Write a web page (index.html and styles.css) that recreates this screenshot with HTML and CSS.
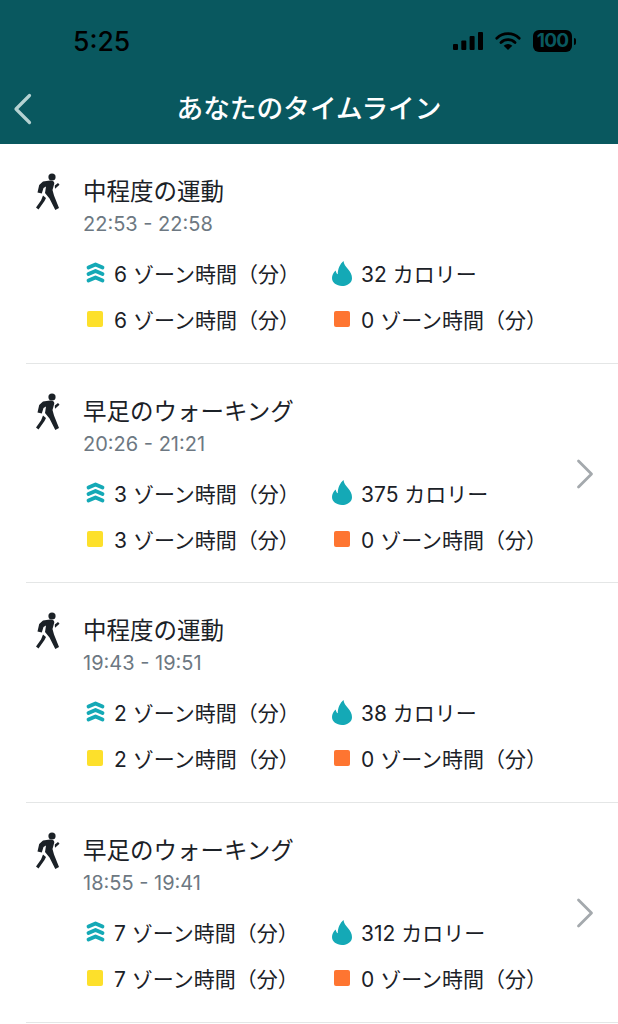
FILE: index.html
```html
<!DOCTYPE html>
<html lang="ja">
<head>
  <meta charset="UTF-8">
  <meta name="viewport" content="width=device-width, initial-scale=1.0">
  <title>あなたのタイムライン</title>
  <link rel="stylesheet" href="styles.css">
</head>
<body>
  <svg class="icon-defs" width="0" height="0">
    <symbol id="walk" viewBox="0 0 24 37">
      <circle cx="16" cy="4" r="3.600"/>
      <path d="M7 8.500L14 7.500C16.500 7.200 18.500 8.600 18.300 10.500L16.500 17 18 22.500 23 35 19.300 37 13.500 25.500 9 20 10 13.500 7.500 15 5.800 20.500 1.500 19.500 3.200 12z"/>
      <path d="M18.800 12.500L22 10 23.500 11.800 19 15.800z"/>
      <path d="M7 22.500L10 25 8.500 28 2.500 36.500 0 34.500 5 27.500z"/>
    </symbol>
    <symbol id="zone" viewBox="0 0 19 22">
      <path d="M2.500 5.500L9.500 2.500l7 3M2.500 12L9.500 9l7 3M2.500 18.500l7-3 7 3" fill="none" stroke="currentColor" stroke-width="3.800" stroke-linecap="round" stroke-linejoin="round"/>
    </symbol>
    <symbol id="flame" viewBox="0 0 20 25">
      <path d="M11.500 0c.4 3.500 2 5.300 4.400 8 2.600 3 4.100 5.800 4.100 9.200C20 21.800 15.500 25 10 25S0 21.600 0 17.100c0-3 1.400-5.600 3.800-7.600.1 1.800.8 3.100 2 3.800C5.700 8 8 3 11.500 0z" fill="currentColor"/>
    </symbol>
  </svg>

  <header class="app-header">
    <div class="status-bar">
      <span class="clock">5:25</span>
      <div class="status-icons">
        <svg width="30" height="18" viewBox="0 0 30 18">
          <rect x="0" y="12" width="5" height="6" rx="1"/>
          <rect x="8.300" y="8.500" width="5" height="9.500" rx="1"/>
          <rect x="16.600" y="4" width="5" height="14" rx="1"/>
          <rect x="25" y="0" width="5" height="18" rx="1"/>
        </svg>
        <svg width="26" height="18" viewBox="0 0 26 18">
          <path d="M1.800 6.200a16 16 0 0 1 22.400 0M6 10.400a10 10 0 0 1 14 0" fill="none" stroke="#000" stroke-width="2.800" stroke-linecap="round"/>
          <path d="M13 18l-4.300-4.300a6 6 0 0 1 8.600 0z"/>
        </svg>
        <div class="battery"><span class="battery-level">100</span></div>
      </div>
    </div>
    <div class="nav-bar">
      <svg class="back" width="20" height="32" viewBox="0 0 20 32">
        <path d="M16.500 2.500L3 16l13.500 13.500" fill="none" stroke="#b5d2d2" stroke-width="3.200" stroke-linecap="round" stroke-linejoin="round"/>
      </svg>
      <h1>あなたのタイムライン</h1>
    </div>
  </header>

  <main id="timeline"></main>

  <script>
    const activities = [
      { name: "中程度の運動", time: "22:53 - 22:58", zone: 6, cal: 32, link: false },
      { name: "早足のウォーキング", time: "20:26 - 21:21", zone: 3, cal: 375, link: true },
      { name: "中程度の運動", time: "19:43 - 19:51", zone: 2, cal: 38, link: false },
      { name: "早足のウォーキング", time: "18:55 - 19:41", zone: 7, cal: 312, link: true }
    ];

    const chevron = `<svg class="chevron" width="18" height="30" viewBox="0 0 18 30"><path d="M2.500 2l13 13-13 13" fill="none" stroke="#a4a9ad" stroke-width="2.800" stroke-linecap="round" stroke-linejoin="round"/></svg>`;

    document.getElementById("timeline").innerHTML = activities
      .map(
        (a) => `<article class="activity">
          <div class="activity-head">
            <svg class="walk-icon"><use href="#walk"/></svg>
            <div>
              <h2>${a.name}</h2>
              <p class="time">${a.time}</p>
            </div>
          </div>
          <div class="metrics">
            <div class="metric"><svg class="zone-icon"><use href="#zone"/></svg>${a.zone} ゾーン時間（分）</div>
            <div class="metric"><svg class="flame-icon"><use href="#flame"/></svg>${a.cal} カロリー</div>
            <div class="metric"><span class="square yellow"></span>${a.zone} ゾーン時間（分）</div>
            <div class="metric"><span class="square orange"></span>0 ゾーン時間（分）</div>
          </div>
          ${a.link ? chevron : ""}
        </article>`
      )
      .join("");
  </script>
</body>
</html>
```

FILE: styles.css
```css
body {
  margin: 0;
  background: #fff;
  color: #1b2127;
  font-family: Inter, "Noto Sans CJK JP", sans-serif;
  overflow: hidden;
}

.icon-defs {
  position: absolute;
}

.app-header {
  height: 144px;
  background: #09585f;
}

.status-bar {
  height: 80px;
  display: flex;
  justify-content: space-between;
  padding: 26px 46px 0 73px;
  box-sizing: border-box;
}

.clock {
  font-size: 26.500px;
  font-weight: 500;
  line-height: 30px;
  color: #000;
}

.status-icons {
  display: flex;
  align-items: flex-start;
  gap: 12px;
  padding-top: 4px;
}

.status-icons svg {
  margin-top: 2px;
}

.battery {
  width: 39px;
  height: 22px;
  background: #000;
  border-radius: 6px;
  position: relative;
  text-align: center;
}

.battery::after {
  content: "";
  position: absolute;
  right: -4px;
  top: 8px;
  width: 2px;
  height: 7px;
  background: #000;
  border-radius: 0 2px 2px 0;
}

.battery-level {
  color: #09585f;
  font-size: 19px;
  font-weight: 700;
  line-height: 22px;
  letter-spacing: -0.8px;
}

.nav-bar {
  position: relative;
  height: 52px;
  display: flex;
  align-items: center;
  justify-content: center;
}

.back {
  position: absolute;
  left: 13px;
  top: 13px;
}

h1 {
  margin: 0;
  color: #fff;
  font-size: 26.700px;
  font-weight: 500;
}

.activity {
  position: relative;
  height: 218.7px;
  margin-left: 26px;
  border-bottom: 1px solid #e4e6e6;
}

.activity-head {
  display: flex;
  padding-top: 29px;
}

.walk-icon {
  width: 24px;
  height: 37px;
  margin-left: 10px;
  margin-right: 23px;
  fill: #1b2127;
}

h2 {
  margin: 0;
  font-size: 23.500px;
  font-weight: 400;
  line-height: 30px;
  margin-top: 4px;
}

.time {
  margin: 5px 0 0;
  font-size: 20px;
  line-height: 24px;
  color: #6d7882;
}

.metrics {
  display: grid;
  grid-template-columns: 246px auto;
  row-gap: 16px;
  margin: 22px 0 0 59px;
}

.metric {
  display: flex;
  align-items: center;
  height: 30px;
  font-size: 21px;
  white-space: pre;
}

.zone-icon,
.flame-icon {
  color: #14a9b6;
}

.zone-icon {
  width: 19px;
  height: 22px;
  margin: 0 9px 0 1px;
}

.flame-icon {
  width: 20px;
  height: 25px;
  margin: 0 9px 0 1px;
}

.square {
  width: 16px;
  height: 16px;
  border-radius: 2px;
}

.yellow {
  margin: 0 11px 0 2px;
  background: #fde02b;
}

.orange {
  margin: 0 11px 0 3px;
  background: #fe7531;
}

.chevron {
  position: absolute;
  right: 24px;
  top: 95px;
}
```
